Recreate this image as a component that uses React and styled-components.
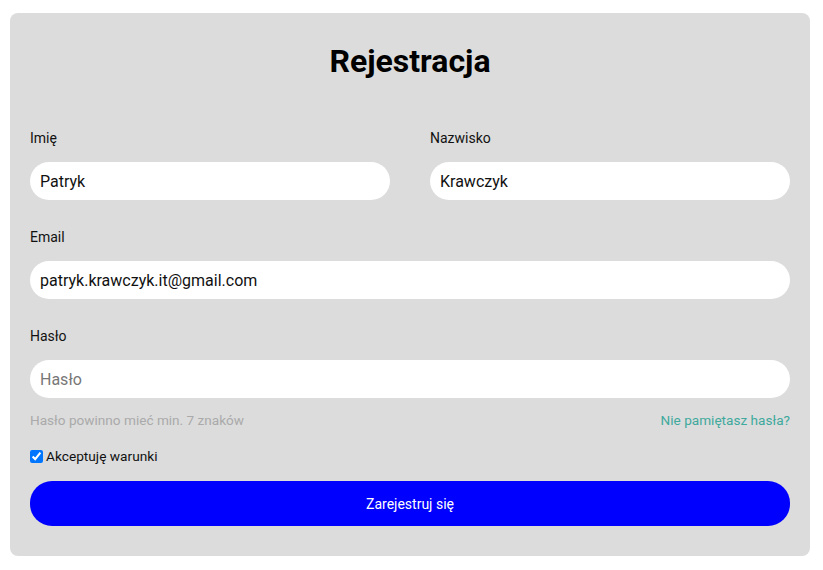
import React from 'react';
import styled, { createGlobalStyle } from 'styled-components';

const GlobalStyle = createGlobalStyle`
  body {
    margin: 0;
    background: #fff;
    font-family: Roboto, "Liberation Sans", sans-serif;
  }
`;

const Page = styled.div`
  padding: 13px 13px 14px 10px;
`;

const Card = styled.form`
  width: 800px;
  box-sizing: border-box;
  background: #dcdcdc;
  border-radius: 8px;
  padding: 20px 20px 30px;
  display: flex;
  flex-direction: column;
`;

const Title = styled.h1`
  margin: 9px 0 50px;
  text-align: center;
  font-size: 32px;
  font-weight: 700;
  color: #000;
`;

const Row = styled.div`
  display: grid;
  grid-template-columns: 1fr 1fr;
  column-gap: 40px;
`;

const Field = styled.div`
  display: flex;
  flex-direction: column;
  margin-bottom: ${p => p.$last ? '14px' : '29px'};
`;

const Label = styled.label`
  font-size: 14px;
  color: #111;
  margin-bottom: 16px;
`;

const Input = styled.input`
  height: 38px;
  box-sizing: border-box;
  border: none;
  outline: none;
  border-radius: 19px;
  background: #fff;
  padding: 0 10px;
  font-family: inherit;
  font-size: 16px;
  color: #111;
  &::placeholder {
    color: #777;
  }
`;

const HintRow = styled.div`
  display: flex;
  justify-content: space-between;
  font-size: 13.6px;
  margin-bottom: 20px;
`;

const Hint = styled.span`
  color: #aaa;
`;

const Forgot = styled.a`
  color: #3fa99c;
  text-decoration: none;
`;

const Terms = styled.label`
  display: flex;
  align-items: center;
  font-size: 13.7px;
  color: #111;
  margin-bottom: 17px;
  input {
    margin: 0 3px 0 0;
    width: 13px;
    height: 13px;
  }
`;

const Submit = styled.button`
  height: 45px;
  border: none;
  border-radius: 22px;
  background: #0000ff;
  color: #fff;
  font-family: inherit;
  font-size: 14px;
  cursor: pointer;
`;

export default function App() {
  return (
    <Page>
      <GlobalStyle />
      <Card onSubmit={e => e.preventDefault()}>
        <Title>Rejestracja</Title>
        <Row>
          <Field>
            <Label>Imię</Label>
            <Input defaultValue="Patryk" />
          </Field>
          <Field>
            <Label>Nazwisko</Label>
            <Input defaultValue="Krawczyk" />
          </Field>
        </Row>
        <Field>
          <Label>Email</Label>
          <Input defaultValue="patryk.krawczyk.it@gmail.com" />
        </Field>
        <Field $last>
          <Label>Hasło</Label>
          <Input type="password" placeholder="Hasło" />
        </Field>
        <HintRow>
          <Hint>Hasło powinno mieć min. 7 znaków</Hint>
          <Forgot href="#">Nie pamiętasz hasła?</Forgot>
        </HintRow>
        <Terms>
          <input type="checkbox" defaultChecked />
          Akceptuję warunki
        </Terms>
        <Submit type="submit">Zarejestruj się</Submit>
      </Card>
    </Page>
  );
}
